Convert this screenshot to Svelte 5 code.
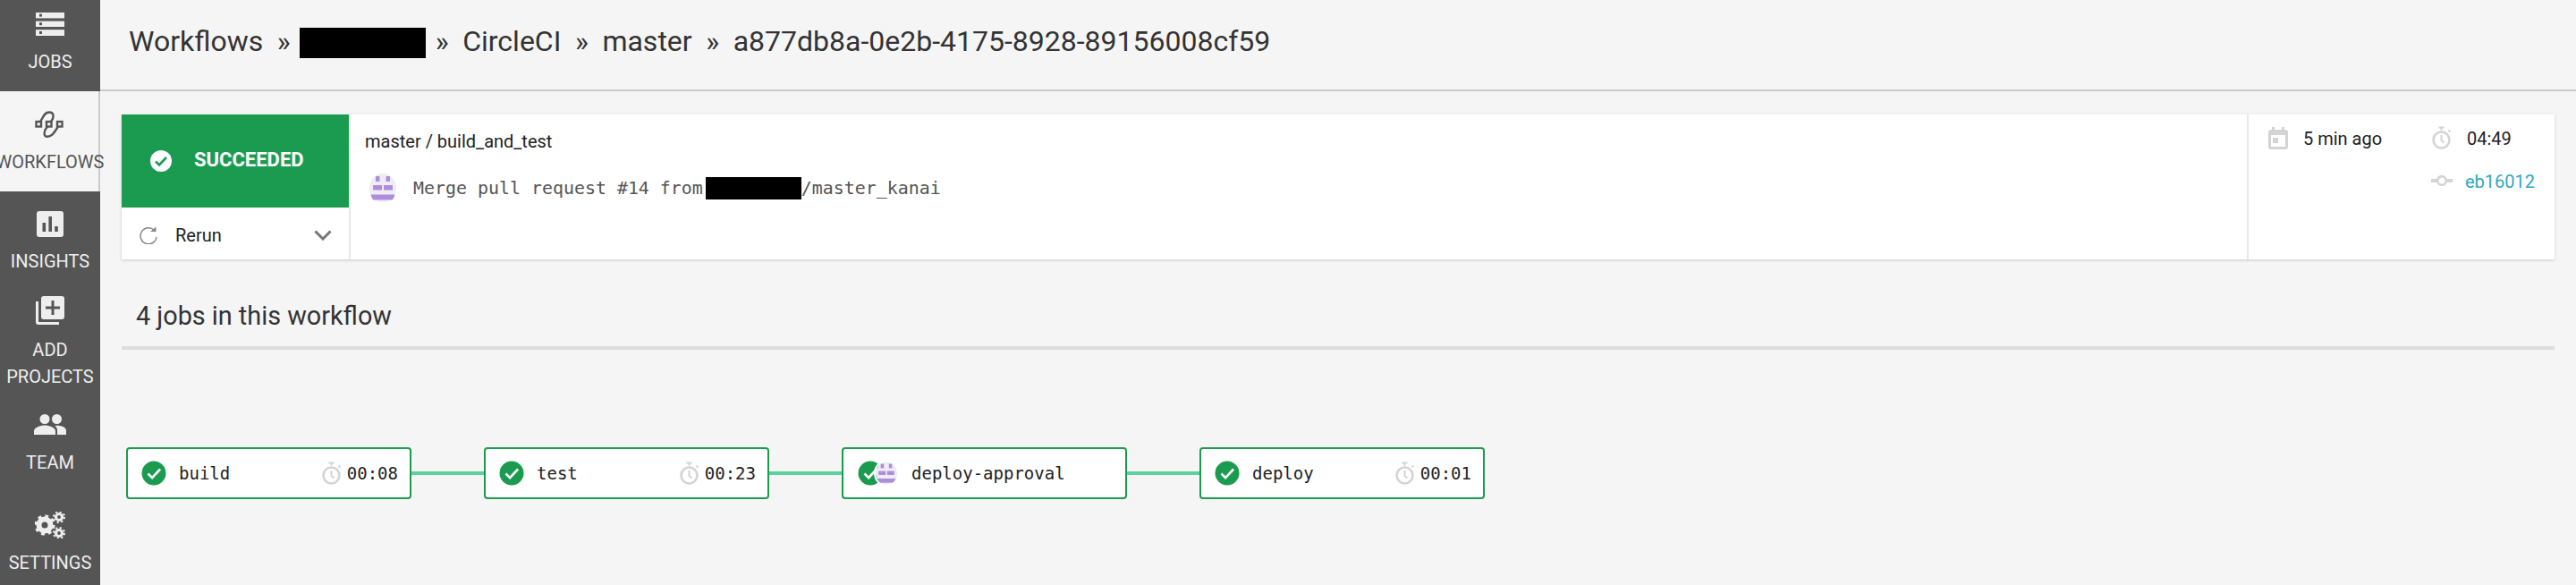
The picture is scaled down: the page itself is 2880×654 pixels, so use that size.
<script>
  const jobs = [
    { name: 'build', time: '00:08' },
    { name: 'test', time: '00:23' },
    { name: 'deploy-approval', approval: true },
    { name: 'deploy', time: '00:01' }
  ];
</script>

{#snippet check(cls)}
  <svg class={cls} viewBox="0 0 28 28"><circle cx="14" cy="14" r="13.5" /><path d="M7.5 14.5l4.6 4.6 9-9.6" /></svg>
{/snippet}

{#snippet timer(cls)}
  <svg class={cls} viewBox="0 0 22 26" fill="none" stroke="#d4d4d4"><circle cx="10.5" cy="15.5" r="9" stroke-width="2.6" /><path d="M7.5 1.5h6M10.5 1.5v3M18.5 4.500l2 2M10.500 10v6l3 2.500" stroke-width="2" /></svg>
{/snippet}

{#snippet avatar(cls)}
  <svg class={cls} viewBox="0 0 30 32"><ellipse cx="15" cy="16" rx="15" ry="16" fill="#efecf5" /><g fill="#ae8ddb"><rect x="7" y="3" width="4.500" height="6" /><rect x="18.500" y="3" width="4.500" height="6" /><rect x="4" y="13" width="10" height="5.500" /><rect x="16" y="13" width="10" height="5.500" /><path d="M1.500 23.500h27a15 16 0 0 1-2.800 6H4.300a15 16 0 0 1-2.800-6z" /></g></svg>
{/snippet}

<div class="page">
  <nav class="side">
    <a class="item jobs">
      <svg class="icon" width="32" height="26" viewBox="0 0 32 26"><g fill="#eee"><rect width="32" height="6.4" /><rect y="9.6" width="32" height="6.4" /><rect y="19.2" width="32" height="6.8" /></g><g fill="#555"><rect x="4" y="1.6" width="3" height="3" /><rect x="4" y="11.2" width="3" height="3" /><rect x="4" y="21" width="3" height="3" /></g></svg>
      <span>JOBS</span>
    </a>
    <a class="item flows">
      <svg class="icon" width="32" height="30" viewBox="0 0 32 30" fill="none" stroke="#555" stroke-width="2.4"><rect x="1.5" y="12" width="5.500" height="5.500" /><rect x="13" y="12" width="5.500" height="5.500" /><rect x="25" y="12" width="5.500" height="5.500" /><path d="M6 12C9 8 10 1.500 16 1.500C22 1.500 21.500 8 18 12M14 17.500C10 22 9 28.800 14 28.800C19 28.800 21 25 26 17.500" /></svg>
      <span>WORKFLOWS</span>
    </a>
    <a class="item insights">
      <svg class="icon" width="30" height="29" viewBox="0 0 30 29"><rect width="30" height="29" rx="3" fill="#eee" /><g fill="#555"><rect x="6.5" y="13" width="3.6" height="10" /><rect x="13.4" y="6" width="3.6" height="17" /><rect x="20.2" y="17" width="3.6" height="6" /></g></svg>
      <span>INSIGHTS</span>
    </a>
    <a class="item add">
      <svg class="icon" width="32" height="32" viewBox="0 0 32 32"><path d="M0 6h3v23h23v3H3a3 3 0 0 1-3-3z" fill="#eee" /><rect x="6" y="0" width="26" height="26" rx="3" fill="#eee" /><path d="M19 5v16M11 13h16" stroke="#555" stroke-width="3" /></svg>
      <span>ADD PROJECTS</span>
    </a>
    <a class="item team">
      <svg class="icon" width="36" height="23" viewBox="0 0 36 23" fill="#eee"><circle cx="12" cy="5.5" r="5.5" /><circle cx="25.5" cy="5.5" r="5.5" /><path d="M0 23v-4c0-4 7-6.500 12-6.500s12 2.500 12 6.500v4zM26 23v-5c0-2-1-3.500-2.500-5 6-.7 12.500 1.500 12.500 5.500V23z" /></svg>
      <span>TEAM</span>
    </a>
    <a class="item settings">
      <svg class="icon" width="34" height="30" viewBox="0 0 34 30" fill="#eee"><g fill="none" stroke="#eee"><circle cx="11" cy="15" r="6.500" stroke-width="6" /><circle cx="11" cy="15" r="10" stroke-width="3.200" stroke-dasharray="3.800 4.050" /><circle cx="27" cy="6" r="3.500" stroke-width="3.200" /><circle cx="27" cy="6" r="6" stroke-width="2" stroke-dasharray="2.200 2.510" /><circle cx="27" cy="24" r="3.500" stroke-width="3.200" /><circle cx="27" cy="24" r="6" stroke-width="2" stroke-dasharray="2.200 2.510" /></g></svg>
      <span>SETTINGS</span>
    </a>
  </nav>

  <main>
    <header>
      <span>Workflows</span><span class="sep">»</span><span class="redact head"></span><span class="sep">»</span><span>CircleCI</span><span class="sep">»</span><span>master</span><span class="sep">»</span><span>a877db8a-0e2b-4175-8928-89156008cf59</span>
    </header>

    <section class="card">
      <div class="status">
        <div class="ok">
          <svg class="okicon" viewBox="0 0 24 24"><circle cx="12" cy="12" r="12" fill="#fff" /><path d="M6 12.500l4 4 8-8.500" fill="none" stroke="#1b9b50" stroke-width="2.600" /></svg>
          <span>SUCCEEDED</span>
        </div>
        <div class="rerun">
          <svg width="20" height="20" viewBox="0 0 20 20" fill="none"><path d="M16.500 4.500A9 9 0 1 0 19 12" stroke="#888" stroke-width="1.500" /><path d="M12.500 5.500h6.500V0z" fill="#888" transform="translate(-.5 .5)" /></svg>
          <span>Rerun</span>
          <svg class="chev" width="20" height="12" viewBox="0 0 20 12" fill="none"><path d="M1.500 1.500l8.500 8.500 8.500-8.500" stroke="#777" stroke-width="3" /></svg>
        </div>
      </div>
      <div class="info">
        <div class="wf">master / build_and_test</div>
        <div class="commit">
          {@render avatar('av')}
          <span class="msg">Merge pull request #14 from</span><span class="redact msgr"></span><span class="msg">/master_kanai</span>
        </div>
      </div>
      <div class="meta">
        <div class="col c1">
          <div class="row">
            <svg class="m" width="22" height="25" viewBox="0 0 22 25"><path fill="#d4d4d4" fill-rule="evenodd" d="M4 0h3v3h8V0h3v3h1a3 3 0 0 1 3 3v16a3 3 0 0 1-3 3H3a3 3 0 0 1-3-3V6a3 3 0 0 1 3-3h1zM3 9v13h16V9z" /><rect x="5" y="12" width="6" height="6" fill="#d4d4d4" /></svg>
            <span>5 min ago</span>
          </div>
        </div>
        <div class="col c2">
          <div class="row">
            {@render timer('m t')}
            <span>04:49</span>
          </div>
          <div class="row r2">
            <svg class="m mc" height="12" viewBox="0 0 24 12" fill="none"><path d="M0 6h24" stroke="#d4d4d4" stroke-width="4" /><circle cx="12" cy="6" r="4.800" fill="#fff" stroke="#d4d4d4" stroke-width="2.600" /></svg>
            <span class="sha">eb16012</span>
          </div>
        </div>
      </div>
    </section>

    <h2>4 jobs in this workflow</h2>
    <div class="rule"></div>

    <div class="graph">
      {#each jobs as job, i}
        {#if i > 0}<div class="line"></div>{/if}
        <div class="job">
          {#if job.approval}
            <div class="stack">
              {@render check('jc')}
              {@render avatar('jav')}
            </div>
          {:else}
            {@render check('jc')}
          {/if}
          <span class="name">{job.name}</span>
          {#if job.time}
            {@render timer('jt')}
            <span class="time">{job.time}</span>
          {/if}
        </div>
      {/each}
    </div>
  </main>
</div>

<style>
  :global(body) { margin: 0; background: #f5f5f5; }
  .page { display: flex; width: 2880px; height: 654px; overflow: hidden; font-family: Roboto, sans-serif; background: #f5f5f5; }

  .side { flex: 0 0 112px; width: 112px; height: 654px; background: #555; color: #eee; font-size: 20px; line-height: 30px; text-align: center; }
  .item { display: flex; flex-direction: column; align-items: center; box-sizing: border-box; width: 112px; }
  .item .icon { flex: none; display: block; }
  .jobs { height: 102px; padding-top: 14px; }
  .jobs span { margin-top: 14px; }
  .flows { height: 112px; padding-top: 22px; background: #f5f5f5; color: #555; border-right: 2px solid #ccc; }
  .flows span { margin-top: 12px; margin-left: 2px; white-space: nowrap; }
  .insights { height: 112px; padding-top: 22px; }
  .insights span { margin-top: 12px; }
  .add { height: 121px; padding-top: 5px; }
  .add span { margin-top: 13px; }
  .team { height: 112px; padding-top: 16px; }
  .team span { margin-top: 16px; }
  .settings { padding-top: 13px; }
  .settings span { margin-top: 12px; }

  main { flex: 1; min-width: 0; }
  header { box-sizing: border-box; height: 102px; border-bottom: 2px solid #ccc; padding: 27px 0 0 32px; display: flex; font-size: 32px; line-height: 38px; color: #333; }
  .sep { margin: 0 15.5px; }
  .redact { background: #000; display: block; flex: none; }
  .head { width: 141px; height: 34px; margin: 4px -5px 0 -5px; }

  .card { display: flex; margin: 26px 24px 0; height: 162px; background: #fff; box-shadow: 0 1px 3px rgba(0,0,0,.18); }
  .status { flex: 0 0 254px; border-right: 2px solid #e8e8e8; }
  .ok { display: flex; align-items: center; height: 104px; background: #1b9b50; color: #fff; font-size: 22px; font-weight: 700; padding-left: 32px; }
  .okicon { width: 24px; height: 24px; margin-right: 25px; }
  .ok span { position: relative; top: -2px; }
  .rerun { box-sizing: border-box; display: flex; align-items: center; height: 58px; padding: 4px 19px 0 20px; font-size: 20px; color: #222; }
  .rerun span { margin-left: 20px; flex: 1; }
  .info { flex: 1; padding: 16px 0 0 16px; min-width: 0; }
  .wf { font-size: 20px; line-height: 28px; color: #222; }
  .commit { display: flex; align-items: center; margin-top: 22px; height: 32px; padding-left: 5px; }
  .av { width: 30px; height: 32px; margin-right: 19px; flex: none; }
  .msg { font-family: "DejaVu Sans Mono", monospace; font-size: 19.93px; color: #555; white-space: pre; }
  .msgr { width: 107px; height: 25px; margin: 0 0 0 3px; }
  .meta { flex: 0 0 344px; box-sizing: border-box; display: flex; border-left: 2px solid #e8e8e8; padding: 13px 0 0 22px; font-size: 20px; color: #222; }
  .col { display: flex; flex-direction: column; }
  .c1 { width: 183px; }
  .row { display: flex; align-items: center; height: 26px; }
  .row span { margin-top: 2px; }
  .r2 { margin-top: 22px; }
  .m { width: 22px; margin-right: 17px; flex: none; }
  .mc { width: 24px; margin-left: -1px; margin-right: 14px; }
  .m.t { height: 26px; }
  .sha { color: #2fa8c0; }

  h2 { margin: 45px 0 0 40px; font-size: 28.8px; line-height: 36px; font-weight: 400; color: #333; }
  .rule { height: 4px; margin: 16px 24px 0; background: #ddd; }

  .graph { display: flex; align-items: center; margin: 109px 0 0 29px; }
  .line { width: 81px; height: 4px; background: #5cd19c; }
  .job { box-sizing: border-box; width: 319px; height: 58px; display: flex; align-items: center; padding: 0 13px 0 15px; background: #fff; border: 2px solid #1b9b50; border-radius: 4px; font-family: "DejaVu Sans Mono", monospace; font-size: 19px; color: #222; }
  .jc { flex: none; width: 28px; height: 28px; }
  :global(.jc circle) { fill: #1b9b50; }
  :global(.jc path) { fill: none; stroke: #fff; stroke-width: 2.6; }
  .name { margin-left: 14px; flex: 1; }
  .jt { flex: none; width: 22px; height: 26px; margin-right: 6px; }
  .stack { display: flex; align-items: center; width: 47px; flex: none; box-sizing: border-box; padding-left: 1px; }
  .jav { flex: none; width: 24px; height: 26px; margin-left: -8px; position: relative; z-index: 1; border-radius: 50%; box-shadow: 0 0 0 2px #fff; }
</style>
